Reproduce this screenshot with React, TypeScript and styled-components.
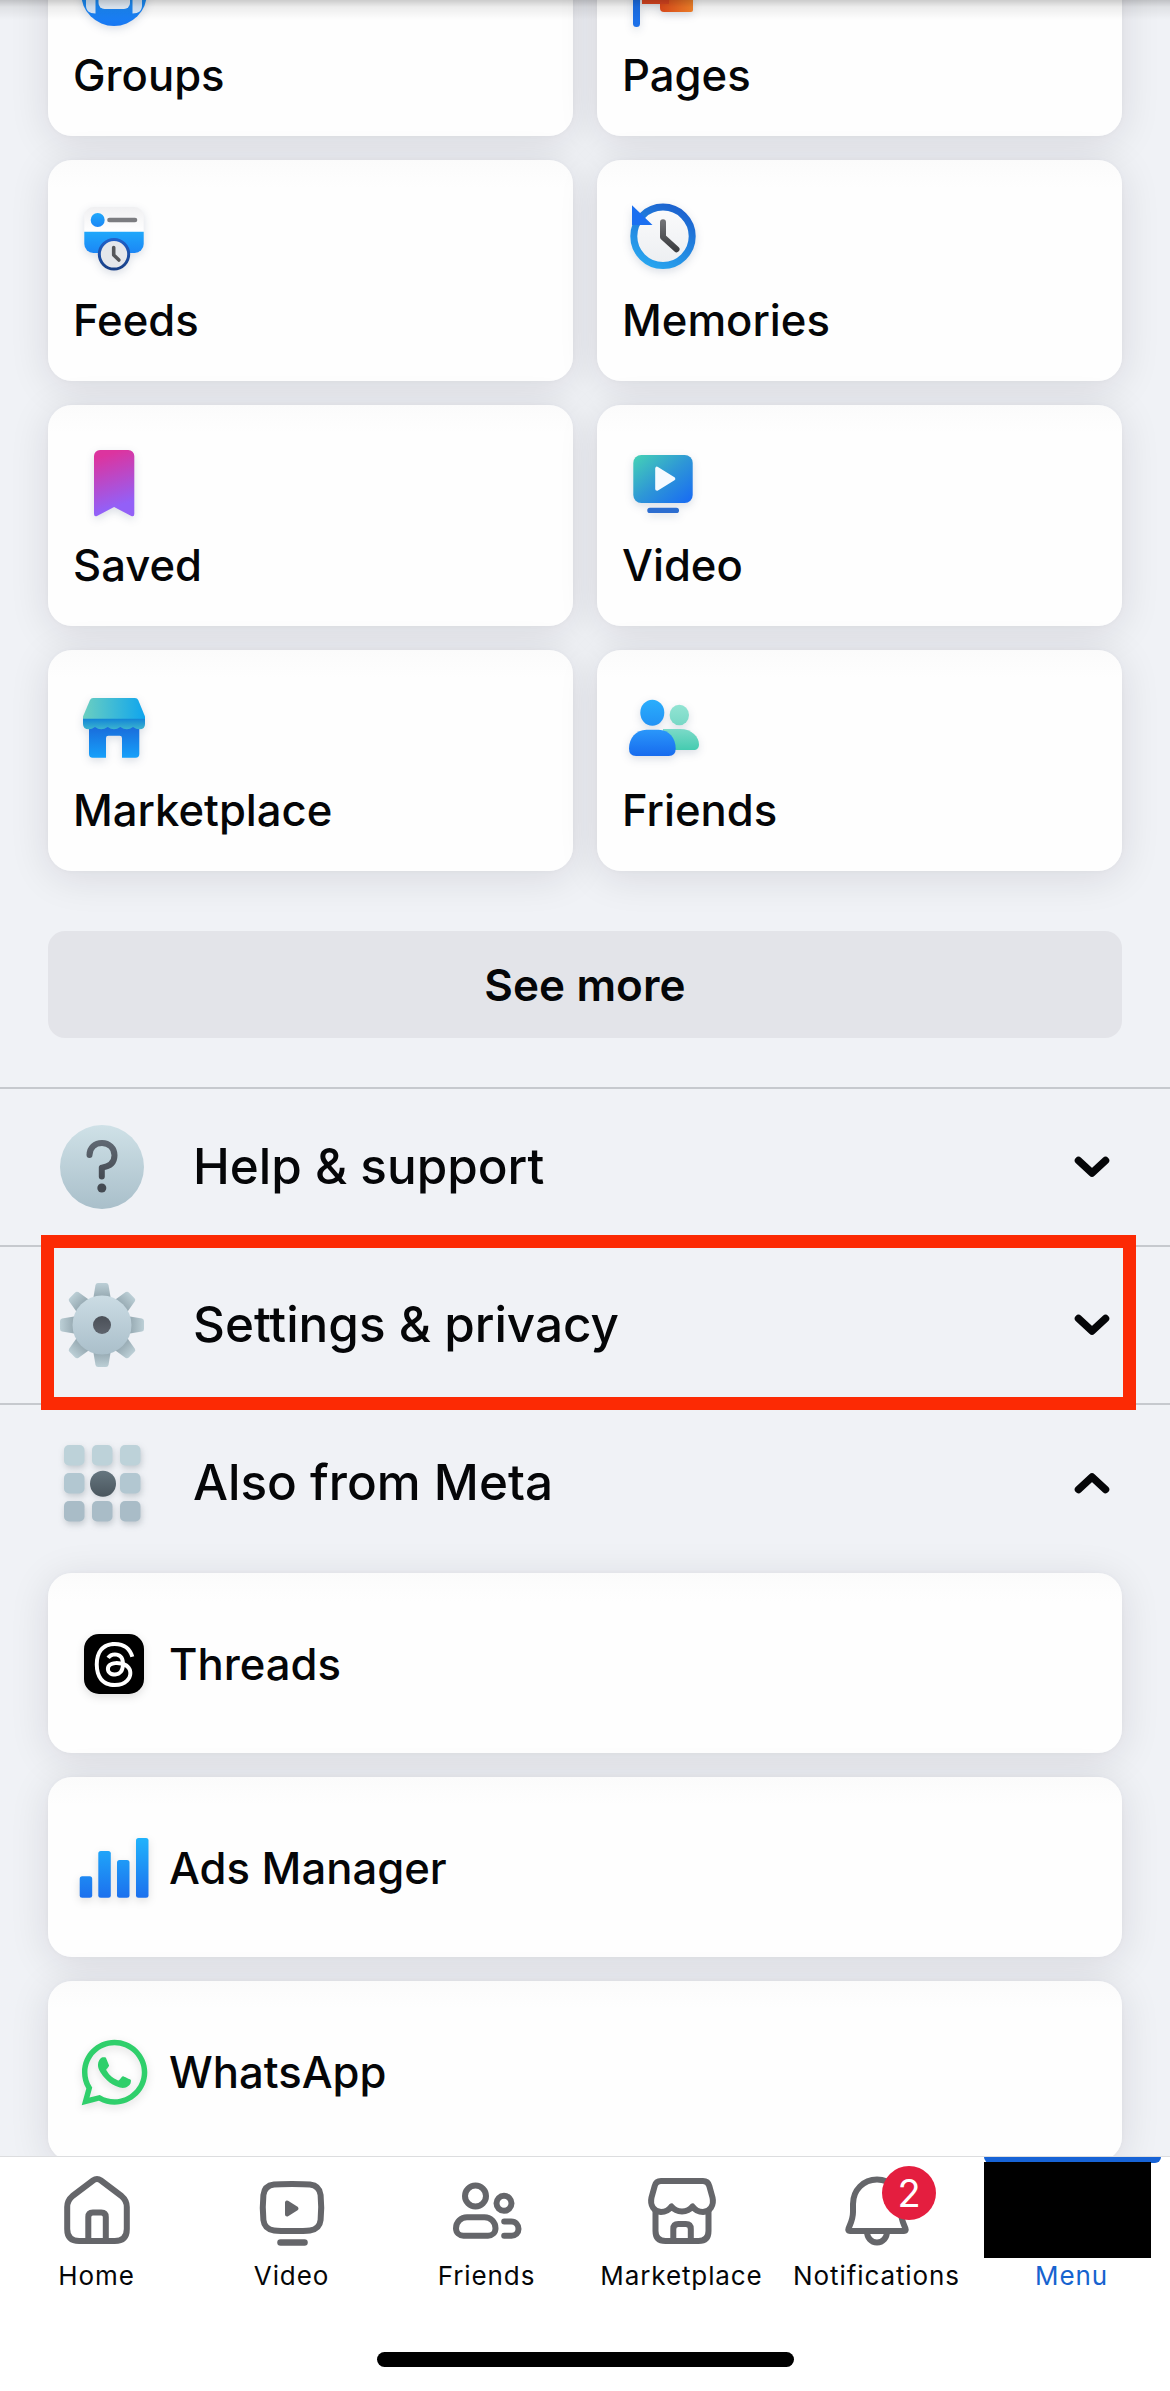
import React from "react";
import styled, { createGlobalStyle, css } from "styled-components";
import { SiThreads } from "react-icons/si";
import { FaWhatsapp } from "react-icons/fa";

const GlobalStyle = createGlobalStyle`
  *, *::before, *::after { box-sizing: border-box; }
  body { margin: 0; background: #f0f2f6; }
  button { border: 0; margin: 0; padding: 0; background: none; font: inherit; color: inherit; text-align: left; }
  svg { display: block; overflow: visible; flex: none; }
`;

const Screen = styled.div`
  display: flex;
  flex-direction: column;
  width: 1170px;
  height: 2391px;
  overflow: hidden;
  background: #f0f2f6;
  color: #050608;
  font-family: Inter, "Liberation Sans", sans-serif;
`;

const Scroller = styled.main`
  position: relative;
  height: 2156px;
  overflow: hidden;
  flex: none;
`;

const HeaderShade = styled.div`
  position: absolute;
  inset: 0 0 auto 0;
  height: 20px;
  background: linear-gradient(rgba(0, 0, 0, 0.2), rgba(0, 0, 0, 0.07) 35%, rgba(0, 0, 0, 0));
`;

const cardSurface = css`
  background: linear-gradient(#fbfbfb, #fefefe 28px);
  border-radius: 24px;
  box-shadow: 0 6px 40px rgba(24, 16, 32, 0.11), 0 0 5px rgba(0, 0, 0, 0.03);
`;

const ShortcutGrid = styled.div`
  display: grid;
  grid-template-columns: 1fr 1fr;
  grid-auto-rows: 221px;
  gap: 24px;
  margin: -85px 48px 0;
`;

const ShortcutCard = styled.button`
  ${cardSurface}
  display: flex;
  flex-direction: column;
  align-items: flex-start;
  gap: 21px;
  padding: 40px 24px 0;

  svg {
    margin-left: 6px;
    filter: drop-shadow(0 3px 4px rgba(0, 30, 80, 0.14));
  }
`;

const Label = styled.span`
  margin-left: 1px;
  padding-top: 2px;
  font-size: 43.6px;
  font-weight: 500;
  line-height: 52px;
  white-space: nowrap;
`;

const SeeMore = styled.button`
  display: flex;
  align-items: center;
  justify-content: center;
  width: 1074px;
  height: 107px;
  margin: 60px 48px 49px;
  border-radius: 17px;
  background: #e3e4e9;
  font-size: 44px;
  letter-spacing: 0.1px;
  font-weight: 600;
`;

const SectionRow = styled.button`
  position: relative;
  display: flex;
  align-items: center;
  width: 100%;
  height: 158px;
  padding: 0 60px;
  border-top: 2px solid #c6c9ce;
`;

const SectionTitle = styled.span`
  flex: 1;
  margin-left: 49px;
  padding-bottom: 2px;
  font-size: 49.4px;
  font-weight: 500;
  line-height: 60px;
`;

const Highlight = styled.div`
  position: absolute;
  z-index: 2;
  left: 41px;
  right: 34px;
  top: -12px;
  bottom: -7px;
  border: 13px solid #fc2a04;
`;

const AppList = styled.div`
  display: flex;
  flex-direction: column;
  gap: 24px;
  margin: 12px 48px 0;
`;

const AppCard = styled.button`
  ${cardSurface}
  display: flex;
  align-items: center;
  gap: 18px;
  height: 180px;
  padding: 2px 30px 0;
  flex: none;
`;

const AppIcon = styled.span`
  display: flex;
  align-items: center;
  justify-content: center;
  width: 72px;
  height: 72px;
  filter: drop-shadow(0 3px 4px rgba(0, 0, 0, 0.12));
`;

const ThreadsTile = styled.span`
  display: flex;
  align-items: center;
  justify-content: center;
  width: 60px;
  height: 60px;
  border-radius: 15px;
  background: #000;
  color: #fff;
`;

const TabBar = styled.nav`
  position: relative;
  flex: 1;
  display: flex;
  flex-direction: column;
  align-items: center;
  justify-content: space-between;
  padding-bottom: 24px;
  background: #fff;
  border-top: 1px solid #dcdddf;
`;

const Tabs = styled.div`
  display: flex;
  width: 1170px;
  margin-left: -2px;
`;

const Tab = styled.button<{ $active?: boolean }>`
  position: relative;
  display: flex;
  flex-direction: column;
  align-items: center;
  width: 195px;
  padding-top: 17px;
  color: ${(p) => (p.$active ? "#1763cf" : "#050608")};
  font-size: 26px;
  line-height: 32px;
  letter-spacing: 0.9px;
`;

const TabLabel = styled.span`
  margin: 14px -8px 0 -8px;
`;

const Badge = styled.span`
  position: absolute;
  left: 103px;
  top: 9px;
  width: 54px;
  height: 54px;
  border-radius: 50%;
  background: #e41e3f;
  color: #fff;
  font-size: 38px;
  line-height: 54px;
  letter-spacing: 0;
  text-align: center;
`;

const ActiveMark = styled.span`
  position: absolute;
  left: 10px;
  top: 0;
  width: 177px;
  height: 6px;
  border-radius: 0 0 6px 6px;
  background: #1763d6;
`;

const Redaction = styled.span`
  position: absolute;
  left: 10px;
  top: 5px;
  width: 167px;
  height: 96px;
  background: #000;
`;

const HomeIndicator = styled.div`
  width: 417px;
  height: 15px;
  border-radius: 8px;
  background: #000;
`;

type GradProps = { id: string; from: string; to: string; mid?: string; diagonal?: boolean; across?: boolean };
const Grad = ({ id, from, to, mid, diagonal, across }: GradProps) => (
  <linearGradient id={id} x1="0" y1="0" x2={diagonal || across ? "1" : "0"} y2={across ? "0" : "1"}>
    <stop offset="0" stopColor={from} />
    {mid && <stop offset=".5" stopColor={mid} />}
    <stop offset="1" stopColor={to} />
  </linearGradient>
);

const Art = ({ size = 72, children }: { size?: number; children: React.ReactNode }) => (
  <svg width={size} height={size} viewBox={`0 0 ${size} ${size}`} fill="none">
    {children}
  </svg>
);

const GroupsIcon = () => (
  <Art>
    <defs>
      <Grad id="gr" from="#20b0ff" to="#1877f2" />
    </defs>
    <circle cx="36" cy="38" r="33" fill="url(#gr)" />
    <path d="M20.500 36h31.500v12a6 6 0 0 1-6 6H26.500a6 6 0 0 1-6-6z" fill="#e6f0fb" />
    <path d="M8 36h9.500v22.500c-6.500 0-9.500-3-9.500-8zM64 36h-9.500v22.500c6.500 0 9.500-3 9.500-8z" fill="#d8e9fb" />
  </Art>
);

const PagesIcon = () => (
  <Art>
    <defs>
      <Grad id="pg" from="#e04a1a" to="#f5832a" across />
    </defs>
    <path d="M33 18h33v37q0 2-2 2H37q-4 0-4-4z" fill="url(#pg)" />
    <path d="M15 10h27v39H15z" fill="#dc4520" />
    <path d="M9.500 5v63.500" stroke="#1b6fe8" strokeWidth="7" strokeLinecap="round" />
  </Art>
);

const FeedsIcon = () => (
  <Art>
    <defs>
      <Grad id="fd" from="#1fa8fb" to="#1b86f5" />
      <Grad id="fw" from="#f0f0f2" to="#ffffff" />
      <Grad id="fc" from="#1f5fc8" to="#183f86" />
    </defs>
    <path d="M6.300 32V16a9 9 0 0 1 9-9h41.400a9 9 0 0 1 9 9v16z" fill="url(#fw)" />
    <path d="M6.300 31.700h59.400V44a9 9 0 0 1-9 9H15.300a9 9 0 0 1-9-9z" fill="url(#fd)" />
    <circle cx="19.700" cy="20" r="7" fill="url(#fd)" />
    <path d="M31.500 20h25.500" stroke="#7b7c80" strokeWidth="4.600" strokeLinecap="round" />
    <circle cx="36" cy="54.300" r="14.700" fill="#e4e6eb" stroke="url(#fc)" strokeWidth="3" />
    <path d="M35.700 47.500v7.500l5.200 5" stroke="#55565a" strokeWidth="3.600" strokeLinecap="round" strokeLinejoin="round" />
  </Art>
);

const MemoriesIcon = () => (
  <Art>
    <defs>
      <linearGradient id="mm" x1=".75" y1="0" x2=".25" y2="1">
        <stop offset="0" stopColor="#1c62cf" />
        <stop offset="1" stopColor="#28a5ef" />
      </linearGradient>
      <Grad id="mf" from="#fbfbfc" to="#eceef1" />
      <Grad id="mh" from="#707174" to="#3c3d40" />
    </defs>
    <circle cx="36" cy="36.300" r="29.200" fill="url(#mf)" stroke="url(#mm)" strokeWidth="7" />
    <path d="M5 5.300v19.700h20.500z" fill="#1b6ff0" />
    <path d="M36 22.200v14.800l13.500 12.300" stroke="url(#mh)" strokeWidth="6" strokeLinecap="round" strokeLinejoin="round" />
  </Art>
);

const SavedIcon = () => (
  <Art>
    <defs>
      <linearGradient id="sv" x1=".4" y1="0" x2=".6" y2="1">
        <stop offset=".05" stopColor="#dc349f" />
        <stop offset=".85" stopColor="#9360f7" />
      </linearGradient>
    </defs>
    <path d="M22 5h28.300a6 6 0 0 1 6 6v58q0 3-3 2L36.100 62 19 71q-3 1-3-2V11a6 6 0 0 1 6-6z" fill="url(#sv)" />
  </Art>
);

const VideoIcon = () => (
  <Art>
    <defs>
      <Grad id="vd" from="#45d3b5" mid="#2e97d6" to="#1769f5" diagonal />
    </defs>
    <rect x="6.300" y="10" width="59.400" height="48" rx="8" fill="url(#vd)" />
    <path d="M30 23.500v20.500l16.500-10.300z" fill="#f5faff" stroke="#f5faff" strokeWidth="3.600" strokeLinejoin="round" />
    <rect x="20.300" y="62.700" width="31.700" height="5.300" rx="2.600" fill="#2c6dd0" />
  </Art>
);

const MarketIcon = () => (
  <Art>
    <defs>
      <Grad id="mk" from="#6bcfc0" to="#0fa5ee" across />
      <Grad id="me" from="#1384d6" to="#3cb5cf" />
      <Grad id="mp" from="#1a67d8" to="#16a0fa" />
    </defs>
    <path d="M11 34h50.300v30q0 3.700-3.700 3.700H44V48q0-2.300-2.300-2.300H30.300Q28 45.700 28 48v19.700H14.700Q11 67.700 11 64z" fill="url(#mp)" />
    <path d="M15 8h42q2.300 0 3.200 2L67 26.500V29H5v-2.500L12 10q1-2 3-2z" fill="url(#mk)" />
    <path d="M5 28.700h62V34q0 5.300-5.500 5.300-3.500 0-6.500-2.300-6 4.600-12.700 0-6.300 4.600-12.600 0-6.700 4.600-12.700 0-3 2.300-6 2.300Q5 39.300 5 34z" fill="url(#me)" />
  </Art>
);

const FriendsIcon = () => (
  <Art>
    <defs>
      <Grad id="fa" from="#2aaefc" to="#2292f5" />
      <Grad id="fb" from="#2a97fa" to="#176bee" />
      <Grad id="fg" from="#92e4d3" to="#78d8c6" />
      <Grad id="fh" from="#7bdac8" to="#45cbb0" />
    </defs>
    <ellipse cx="52.300" cy="25" rx="9.700" ry="10.300" fill="url(#fg)" />
    <path d="M36 39h17c12 0 19 8 19 15.500 0 3.500-2 5.500-5.500 5.500H36z" fill="url(#fh)" />
    <ellipse cx="25.300" cy="22.700" rx="12" ry="13" fill="url(#fa)" />
    <path d="M19.500 39.700h12C42 39.700 48.700 48 48.700 58.500q0 7.500-7 7.500H9q-7 0-7-7.500C2 48 9 39.700 19.500 39.700z" fill="url(#fb)" />
  </Art>
);

const HelpIcon = () => (
  <Art size={84}>
    <defs>
      <Grad id="hp" from="#cfe1e7" to="#a9bfca" />
      <Grad id="hq" from="#5f6771" to="#464c54" />
    </defs>
    <circle cx="42" cy="42" r="42" fill="url(#hp)" />
    <path d="M29.500 30C29.500 22.500 35 18 42 18s12.500 5 12.500 12.300c0 7.200-4.500 11.200-12.700 12.300V51.500" stroke="url(#hq)" strokeWidth="6" strokeLinecap="round" strokeLinejoin="round" />
    <circle cx="41.800" cy="63" r="4.500" fill="#444a52" />
  </Art>
);

const GearIcon = () => (
  <Art size={84}>
    <defs>
      <Grad id="gb" from="#cbdce4" to="#aabfca" />
      <Grad id="gt" from="#bccfd6" to="#8fa2ab" />
      <Grad id="gh" from="#4a4f57" to="#5e646d" />
    </defs>
    {[0, 45, 90, 135, 180, 225, 270, 315].map((a) => (
      <path
        key={a}
        d="M38 0h8q2 0 2.500 2L51 17H33l2.500-15Q36 0 38 0z"
        fill="url(#gt)"
        transform={`rotate(${a} 42 42)`}
      />
    ))}
    <circle cx="42" cy="42" r="29.500" fill="url(#gb)" />
    <circle cx="42" cy="42" r="9" fill="url(#gh)" />
  </Art>
);

const Tiles = styled.g`
  filter: drop-shadow(1px 3px 3px rgba(60, 80, 90, 0.25));
`;

const GridIcon = () => (
  <Art size={84}>
    <defs>
      <Grad id="gd" from="#66767f" to="#4a565e" />
    </defs>
    <Tiles>
      {["#bdd2d9", "#b2c7d1", "#a9bcc7"].map((fill, r) =>
        [4, 32, 60].map((x) => <rect key={`${r}-${x}`} x={x} y={4 + r * 28} width="20.500" height="20.500" rx="5" fill={fill} />)
      )}
    </Tiles>
    <circle cx="43" cy="42.700" r="13" fill="url(#gd)" />
  </Art>
);

const Chevron = ({ up }: { up?: boolean }) => (
  <svg width="36" height="22" viewBox="0 0 36 22" fill="none" stroke="#050608" strokeWidth="7.500" strokeLinecap="round" strokeLinejoin="round">
    <path d={up ? "M4.500 17.500l13.500-12.500L31.500 17.500" : "M4.500 4.500l13.500 12.500L31.500 4.500"} />
  </svg>
);

const BarsIcon = () => (
  <Art>
    <defs>
      <linearGradient id="br" gradientUnits="userSpaceOnUse" x1="0" y1="5" x2="0" y2="66">
        <stop offset="0" stopColor="#20b4fc" />
        <stop offset="1" stopColor="#1c70ee" />
      </linearGradient>
    </defs>
    {[
      [1.7, 44.2],
      [20.3, 19],
      [39, 28],
      [58, 6],
    ].map(([x, y]) => (
      <rect key={x} x={x} y={y} width="12.500" height={65.8 - y} rx="2.500" fill="url(#br)" />
    ))}
  </Art>
);

const TabArt = ({ children }: { children: React.ReactNode }) => (
  <svg width="72" height="72" viewBox="0 0 72 72" fill="none" stroke="#65666a" strokeWidth="6" strokeLinecap="round" strokeLinejoin="round">
    {children}
  </svg>
);

const HomeTabIcon = () => (
  <TabArt>
    <path d="M32 6.500q4-3 8 0l20.500 15.500q5.300 4.500 5.300 11V55q0 12-12 12H18.200q-12 0-12-12V33q0-6.500 5.300-11z" />
    <path d="M27.300 66V43q0-4.500 4.500-4.500h8.500q4.500 0 4.500 4.500v23" />
  </TabArt>
);

const VideoTabIcon = () => (
  <TabArt>
    <path d="M36 10c8 0 13 0 18 .6 6.500.8 9.900 4.200 10.600 10.400.8 8 .8 17 0 25-.7 6.200-4.100 9.600-10.600 10.400-5 .6-10 .6-18 .6s-13 0-18-.6c-6.500-.8-9.900-4.200-10.600-10.400-.8-8-.8-17 0-25C8.100 14.800 11.500 11.400 18 10.600 23 10 28 10 36 10z" />
    <path d="M31 28.500v12l9.500-6z" fill="#65666a" strokeWidth="4" />
    <path d="M24.500 68.500h24" strokeWidth="6.500" />
  </TabArt>
);

const FriendsTabIcon = () => (
  <TabArt>
    <circle cx="24.500" cy="22" r="10.500" />
    <circle cx="53" cy="29.300" r="7.500" />
    <path d="M16 43.200h17.500c6 0 11 5 11 11 0 4.500-3.500 7.500-7.500 7.500H12.500c-4 0-7.500-3-7.500-7.500 0-6 5-11 11-11z" />
    <path d="M53.200 47.500h7c4.500 0 7.300 3.300 7.300 7.500 0 4-3 6.700-7 6.700h-7.300" />
  </TabArt>
);

const MarketTabIcon = () => (
  <TabArt>
    <path d="M15 7h42q5 0 6.300 5l3.200 11.500c1.800 8-2.500 14-9.500 14.500-4.500 0-8-2-10.500-5.500-5 6.500-16 6.500-21 0C23 36 19.500 38 15 38 8 37.500 3.700 31.500 5.500 23.500L8.700 12Q10 7 15 7z" />
    <path d="M9.500 38v19q0 10 10 10h33q10 0 10-10V38" />
    <path d="M27.300 66V55q0-5 5-5h7.500q5 0 5 5v11" />
  </TabArt>
);

const BellTabIcon = () => (
  <TabArt>
    <path d="M36 5.500c-13.500 0-24 10.500-24 24.500v8c0 7.500-2.500 11.500-4.500 16.500-.8 2 0 2.500 1.500 2.500h54c1.500 0 2.300-.5 1.500-2.500-2-5-4.500-9-4.500-16.500v-8C60 16 49.500 5.500 36 5.500z" />
    <path d="M26 57.500c0 6 4 11 10 11s10-5 10-11" />
  </TabArt>
);

const shortcuts = [
  { label: "Groups", Icon: GroupsIcon },
  { label: "Pages", Icon: PagesIcon },
  { label: "Feeds", Icon: FeedsIcon },
  { label: "Memories", Icon: MemoriesIcon },
  { label: "Saved", Icon: SavedIcon },
  { label: "Video", Icon: VideoIcon },
  { label: "Marketplace", Icon: MarketIcon },
  { label: "Friends", Icon: FriendsIcon },
];

const tabs = [
  { label: "Home", Icon: HomeTabIcon },
  { label: "Video", Icon: VideoTabIcon },
  { label: "Friends", Icon: FriendsTabIcon },
  { label: "Marketplace", Icon: MarketTabIcon },
  { label: "Notifications", Icon: BellTabIcon, badge: 2 },
];

export default function App() {
  return (
    <Screen>
      <GlobalStyle />
      <Scroller>
        <ShortcutGrid>
          {shortcuts.map(({ label, Icon }) => (
            <ShortcutCard key={label}>
              <Icon />
              <Label>{label}</Label>
            </ShortcutCard>
          ))}
        </ShortcutGrid>
        <SeeMore>See more</SeeMore>
        <SectionRow>
          <HelpIcon />
          <SectionTitle>Help &amp; support</SectionTitle>
          <Chevron />
        </SectionRow>
        <SectionRow>
          <GearIcon />
          <SectionTitle>Settings &amp; privacy</SectionTitle>
          <Chevron />
          <Highlight />
        </SectionRow>
        <SectionRow>
          <GridIcon />
          <SectionTitle>Also from Meta</SectionTitle>
          <Chevron up />
        </SectionRow>
        <AppList>
          <AppCard>
            <AppIcon>
              <ThreadsTile>
                <SiThreads size={45} />
              </ThreadsTile>
            </AppIcon>
            <Label>Threads</Label>
          </AppCard>
          <AppCard>
            <AppIcon>
              <BarsIcon />
            </AppIcon>
            <Label>Ads Manager</Label>
          </AppCard>
          <AppCard>
            <AppIcon>
              <FaWhatsapp size={75} color="#2fcf6b" />
            </AppIcon>
            <Label>WhatsApp</Label>
          </AppCard>
        </AppList>
        <HeaderShade />
      </Scroller>
      <TabBar>
        <Tabs>
          {tabs.map(({ label, Icon, badge }) => (
            <Tab key={label}>
              <Icon />
              {badge && <Badge>{badge}</Badge>}
              <TabLabel>{label}</TabLabel>
            </Tab>
          ))}
          <Tab $active>
            <ActiveMark />
            <Redaction />
            <TabArt>
              <path d="M8 18h56M8 36h56M8 54h56" />
            </TabArt>
            <TabLabel>Menu</TabLabel>
          </Tab>
        </Tabs>
        <HomeIndicator />
      </TabBar>
    </Screen>
  );
}
